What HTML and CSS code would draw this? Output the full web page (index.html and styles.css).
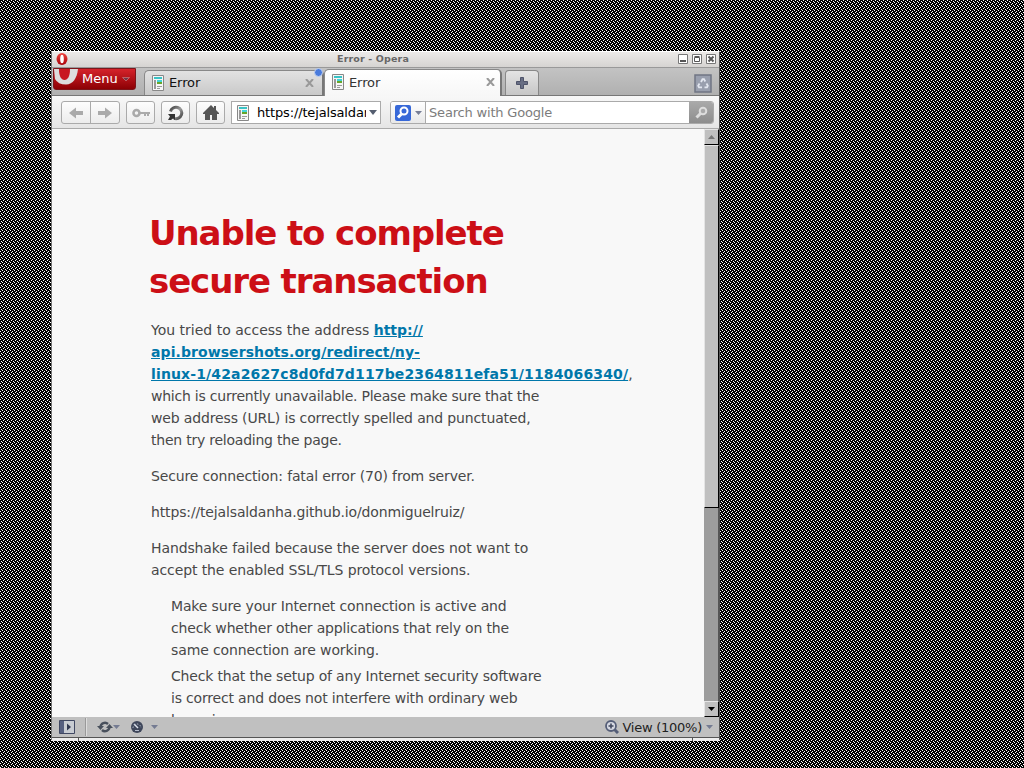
FILE: index.html
```html
<!DOCTYPE html>
<html lang="en">
<head>
<meta charset="utf-8">
<title>Error - Opera</title>
<link rel="stylesheet" href="styles.css">
</head>
<body>
<svg class="defs" width="0" height="0">
  <defs>
    <linearGradient id="red" x1="0" y1="0" x2="0" y2="1"><stop offset="0" stop-color="#f0453f"/><stop offset="1" stop-color="#a80008"/></linearGradient>
    <linearGradient id="dark" x1="0" y1="0" x2="1" y2="1"><stop offset="0" stop-color="#444"/><stop offset=".5" stop-color="#999"/><stop offset="1" stop-color="#444"/></linearGradient>
    <symbol id="page" viewBox="0 0 12 16">
      <path fill="#f6f6f6" stroke="#888" d="M.5.5h11v15H.5z"/>
      <path fill="#39c3c6" d="M2 2h8v2H2z"/><path fill="#999" d="M2 5h2v9H2zM5 11h5v1H5zM5 13h3v1H5z"/>
      <path fill="#41d5d7" d="M5 5h5v2H5z"/><path fill="#68a52a" d="M5 7h5v2H5z"/>
    </symbol>
    <symbol id="arrow" viewBox="0 0 14 12"><path fill="#aaa" d="M0 6l7-5.500V4h7v4H7v3.500z"/></symbol>
    <symbol id="down" viewBox="0 0 7 4"><path d="M0 0h7L3.500 4z"/></symbol>
  </defs>
</svg>
<div class="window">
  <div class="titlebar">
    <svg class="app" width="12" height="12" viewBox="0 0 12 12"><ellipse cx="6" cy="6" rx="5.500" ry="6" fill="url(#red)"/><ellipse cx="6" cy="6" rx="1.800" ry="4.300" fill="#fff"/></svg>
    <span class="title">Error - Opera</span>
    <svg class="winbtns" width="38" height="10" viewBox="0 0 38 10">
      <g fill="#fff" stroke="#777"><path d="M.5.5h9v9h-9zM14.500.5h9v9h-9zM28.500.5h9v9h-9z"/></g>
      <path fill="#555" d="M2 6h6v2H2z"/><path fill="none" stroke="#555" d="M16.500 3.500h5v4h-5zM16.500 2.500h5"/>
      <path stroke="#555" stroke-width="2" d="M30.500 2.500l5 5m0-5l-5 5"/>
    </svg>
  </div>
  <div class="tabbar">
    <div class="menu">
      <svg width="24" height="18" viewBox="0 0 24 18"><path fill="#ddd" d="M0 0H24C23 9 19 15.500 12 15.500Q4 15.500 1 10z"/><path fill="#c81820" d="M5 0h11c0 7-2 11-5.500 11S5 7 5 0z"/></svg>
      <span>Menu</span>
      <svg class="mdown" width="8" height="5"><path d="M.5.5h7L4 4z" fill="#6c3848" stroke="#d07a80" stroke-width=".7"/></svg>
    </div>
    <div class="tab back">
      <svg width="12" height="16"><use href="#page"/></svg><span>Error</span>
      <svg class="x" width="9" height="8" viewBox="0 0 9 8"><path d="M1 0l7 8M8 0L1 8"/></svg>
      <i class="dot"></i>
    </div>
    <div class="tab front">
      <svg width="12" height="16"><use href="#page"/></svg><span>Error</span>
      <svg class="x" width="9" height="8" viewBox="0 0 9 8"><path d="M1 0l7 8M8 0L1 8"/></svg>
    </div>
    <div class="newtab"><svg width="12" height="12"><path fill="#686e84" stroke="#4f546a" d="M4.500.5h3v4h4v3h-4v4h-3v-4h-4v-3h4z"/></svg></div>
    <svg class="trash" width="18" height="19" viewBox="0 0 18 19"><path fill="#999fae" stroke="#707684" stroke-width="1.500" d="M1 1h16v17H1z"/><path fill="none" stroke="#e3e7f0" stroke-width="1.800" d="M7 8l1.500-2.800h1.500L11.300 7.500M12.500 9.500l1.300 2.300-.8 1.500h-2.500M8 13.300H5l-.8-1.500L5.500 9.500"/></svg>
  </div>
  <div class="toolbar">
    <div class="btn pair"><span><svg width="14" height="12"><use href="#arrow"/></svg></span><span><svg class="flip" width="14" height="12"><use href="#arrow"/></svg></span></div>
    <div class="btn key"><svg width="18" height="10" viewBox="0 0 18 10"><circle cx="4.500" cy="5" r="3" fill="none" stroke="#aaa" stroke-width="2.600"/><path fill="#aaa" d="M8 4h10v2h-1v2h-2V6h-1v2h-2V6H8z"/></svg></div>
    <div class="btn reload"><svg width="16" height="16" viewBox="0 0 16 16"><path fill="none" stroke="url(#dark)" stroke-width="3" d="M2.500 6.500A5.700 5.700 0 1 1 6 13.300"/><path fill="#333" d="M0 9h7v6l-2-1.500L3 15H0l2-3.500z"/></svg></div>
    <div class="btn home"><svg width="16" height="15" viewBox="0 0 16 15"><path fill="#555" d="M8 0l3 3V1h2v4l3 3v1h-2v6H9v-5H7v5H2V9H0V8z"/></svg></div>
    <div class="address"><svg width="12" height="16"><use href="#page"/></svg><span class="url">https://tejalsaldanha</span><svg class="adown" width="8" height="5" viewBox="0 0 7 4" preserveAspectRatio="none"><path d="M0 0h7L3.500 4z"/></svg></div>
    <div class="search">
      <div class="engine"><svg width="16" height="16"><rect width="16" height="16" rx="2" fill="#3768d8"/><circle cx="9" cy="6" r="3.500" fill="none" stroke="#fff" stroke-width="2"/><path stroke="#fff" stroke-width="3" d="M6.500 9L3 12.500"/></svg><svg width="7" height="4"><use href="#down"/></svg></div>
      <span class="hint">Search with Google</span>
      <div class="go"><svg width="13" height="13"><circle cx="8" cy="5" r="3.300" fill="#aaa" stroke="#ddd" stroke-width="2"/><path stroke="#ddd" stroke-width="3" d="M5.500 7.500L1.500 11.500"/></svg></div>
    </div>
  </div>
  <div class="view">
    <div class="page">
      <h1>Unable to complete<br>secure transaction</h1>
      <p>You tried to access the address <a>http://<br><span class="w1">api.browsershots.org/redirect/ny-</span><br><span class="w2">linux-1/42a2627c8d0fd7d117be2364811efa51/1184066340/</span></a>,<br><span class="t4">which is currently unavailable. Please make sure that the</span><br><span class="t2">web address (URL) is correctly spelled and punctuated,</span><br><span class="t4">then try reloading the page.</span></p>
      <p class="t2">Secure connection: fatal error (70) from server.</p>
      <p class="t2">https://tejalsaldanha.github.io/donmiguelruiz/</p>
      <p class="t1">Handshake failed because the server does not want to<br>accept the enabled SSL/TLS protocol versions.</p>
      <ul><li><span class="t2">Make sure your Internet connection is active and</span><br><span class="t3">check whether other applications that rely on the</span><br><span class="t1">same connection are working.</span></li>
      <li class="t3">Check that the setup of any Internet security software<br>is correct and does not interfere with ordinary web<br>browsing.</li></ul>
    </div>
    <div class="scroll">
      <div class="sbtn"><svg class="up" width="7" height="4"><use href="#down"/></svg></div>
      <div class="thumb"></div>
      <div class="track"></div>
      <div class="sbtn end"><svg width="7" height="4"><use href="#down"/></svg></div>
    </div>
  </div>
  <div class="status">
    <svg class="panel" width="16" height="14"><path fill="#c8ccd2" stroke="#404862" d="M.5.5h15v13H.5z"/><path fill="#566080" d="M1 1h4v12H1z"/><path fill="#303850" d="M8 3.500l4 3.500-4 3.500z"/></svg>
    <i class="sep"></i>
    <svg class="sync" width="16" height="12" viewBox="0 0 16 12"><path fill="none" stroke="#48505c" stroke-width="2.500" d="M3.500 6A4.500 4.500 0 0 1 11 3M12.500 6A4.500 4.500 0 0 1 5 9"/><path fill="#48505c" d="M0 5h7L3.500 9zM9 7h7l-3.500-4z"/></svg>
    <svg class="sd" width="7" height="4"><use href="#down"/></svg>
    <svg class="gauge" width="12" height="12"><circle cx="6" cy="6" r="6" fill="#3e465a"/><path stroke="#dde3ee" stroke-width="1.500" d="M3 3l4 4"/><path fill="none" stroke="#b5bccb" stroke-dasharray="1.500 1.500" d="M2 7a4 4 0 1 1 8 0"/><path stroke="#b5bccb" d="M4 9.500h4"/></svg>
    <svg class="sd2" width="7" height="4"><use href="#down"/></svg>
    <svg class="mag" width="14" height="14"><circle cx="6" cy="6" r="5" fill="#d5d8e2" stroke="#555e78" stroke-width="1.800"/><path stroke="#40485e" stroke-width="1.600" d="M3.500 6h5M6 3.500v5"/><path stroke="#555e78" stroke-width="3" d="M9.500 9.500L13 13"/></svg>
    <span class="zoom">View (100%)</span>
    <svg class="sd3" width="7" height="4"><use href="#down"/></svg>
  </div>
  <div class="grip"><i></i><i></i><i></i></div>
</div>
</body>
</html>
```
FILE: styles.css
```css
* { box-sizing: border-box; }
html { height: 100%; background: #000; }
body {
  margin: 0; height: 768px; overflow: hidden; padding: 51px 0 0 51px;
  font-family: "DejaVu Sans", sans-serif; font-size: 13px; color: #111;
  background:
    conic-gradient(from 0deg at 1px 1px, transparent 75%, #fff 0) 3px 0 / 4px 4px,
    conic-gradient(from 0deg at 1px 1px, transparent 75%, #fff 0) 1px 1px / 4px 4px,
    conic-gradient(from 0deg at 1px 1px, transparent 75%, #fff 0) 2px 2px / 4px 4px,
    conic-gradient(from 0deg at 1px 1px, transparent 75%, #fff 0) 0 3px / 4px 4px, #000;
}
.defs { position: absolute; }
svg { display: block; flex: none; }
span { white-space: nowrap; }
.window { width: 669px; height: 689px; border: 1px solid #777; border-top-color: #fff; border-right-color: #555; background: #c0c0c0; display: flex; flex-direction: column; }
.titlebar { height: 16px; flex: none; display: flex; align-items: center; background: linear-gradient(#eceae8, #d6d4d2); border-bottom: 1px solid #999; padding-left: 4px; }
.app { margin-top: -1px; }
.title { flex: 1; text-align: center; font-size: 9.500px; font-weight: bold; color: #666; padding: 0 14px 2px; letter-spacing: .15px; }
.winbtns { margin: -1px 3px 0 0; }
.tabbar { height: 28px; flex: none; display: flex; align-items: flex-end; border-bottom: 1px solid #777; background: linear-gradient(#c3c3c3, #b0b0b0); }
.menu { width: 83px; height: 22px; align-self: flex-start; margin: 0 8px 0 1px; display: flex; border: 1px solid #7b161b; border-radius: 0 0 3px 3px; background: linear-gradient(#d5232b, #8c0004); color: #fff; align-items: flex-start; overflow: hidden; }
.menu span { margin-left: 4px; line-height: 20px; }
.mdown { margin: 8px 0 0 4px; }
.tab { height: 26px; display: flex; align-items: center; padding: 0 7px 2px; border: 1px solid #888; border-bottom: 0; border-radius: 5px 5px 0 0; position: relative; }
.tab span { margin-left: 5px; flex: 1; letter-spacing: -.1px; }
.back { width: 180px; height: 25px; padding-right: 8px; padding-bottom: 1px; background: linear-gradient(#e2e2e2, #c9c9c9); border-right: 2px solid #777; }
.front { width: 178px; height: 27px; margin-bottom: -1px; border-right: 2px solid #777; padding-right: 5px; background: linear-gradient(#fff, #f7f7f7); }
.front span { color: #333; }
.x { fill: none; stroke: #999; stroke-width: 2; }
.dot { position: absolute; right: -1px; top: -3px; width: 9px; height: 9px; border-radius: 50%; background: #4a7bdc; border: 1px solid #c6d4ee; }
.newtab { width: 34px; height: 25px; margin-left: 3px; border: 1px solid #888; border-bottom: 0; border-radius: 4px 4px 0 0; background: linear-gradient(#e4e4e4, #c6c6c6); display: flex; align-items: center; justify-content: center; }
.trash { margin: 0 7px 2px auto; }
.toolbar { height: 33px; flex: none; display: flex; align-items: center; padding: 1px 0 0 9px; background: linear-gradient(#f8f8f8, #e5e5e5); border-bottom: 1px solid #aaa; }
.btn { height: 23px; border: 1px solid #aaa; border-radius: 3px; background: linear-gradient(#fdfdfd, #ececec); display: flex; align-items: center; justify-content: center; }
.pair { width: 59px; }
.pair span { flex: 1; height: 21px; display: flex; align-items: center; justify-content: center; }
.pair span + span { border-left: 1px solid #aaa; }
.flip { transform: scaleX(-1); }
.key { width: 29px; margin-left: 6px; }
.reload, .home { width: 29px; margin-left: 6px; }
.address { width: 150px; height: 23px; margin-left: 6px; border: 1px solid #aaa; background: #fff; display: flex; align-items: center; padding-left: 5px; }
.url { width: 109px; margin-left: 8px; overflow: hidden; color: #000; letter-spacing: -.15px; }
.adown { fill: #555e70; margin-left: 3px; }
.search { flex: 1; height: 23px; margin: 0 5px 0 9px; display: flex; border: 1px solid #aaa; border-radius: 3px; background: #fff; overflow: hidden; }
.engine { width: 35px; border-right: 1px solid #aaa; background: linear-gradient(#fff, #e8e8e8); display: flex; align-items: center; gap: 4px; padding-left: 4px; fill: #777e96; }
.hint { flex: 1; padding-left: 3px; line-height: 21px; color: #7c7c7c; letter-spacing: -.18px; }
.go { width: 24px; background: linear-gradient(#a9a9a9, #8d8d8d); display: flex; align-items: center; justify-content: center; }
.view { flex: none; height: 588px; display: flex; }
.page { width: 652px; background: #f8f8f8; overflow: hidden; padding: 80px 0 0 99px; font-size: 14px; line-height: 22px; color: #484848; white-space: nowrap; }
h1 { margin: 0 0 14px -2px; font-size: 34px; line-height: 48px; letter-spacing: -1.1px; color: #cc0f16; }
p { margin: 0 0 14px; }
a { color: #0077aa; font-weight: bold; text-decoration: underline; }
.t1 { letter-spacing: -.11px; }
.t2 { letter-spacing: -.145px; }
.t3 { letter-spacing: -.18px; }
.t4 { letter-spacing: -.23px; }
.w1 { letter-spacing: .08px; }
.w2 { letter-spacing: .14px; }
ul { list-style: none; margin: 0; padding: 0 0 0 20px; }
li { margin-bottom: 4px; }
.scroll { width: 15px; display: flex; flex-direction: column; background: #9d9d9d; }
.sbtn { height: 16px; flex: none; background: #c0c0c0; border: 1px solid #e5e5e5; border-right-color: #000; border-bottom-color: #000; display: flex; align-items: center; justify-content: center; fill: #777; }
.up { transform: scaleY(-1); }
.thumb { height: 363px; flex: none; background: #c0c0c0; border: 1px solid #e5e5e5; border-right-color: #000; border-bottom-color: #000; }
.track { flex: 1; border-right: 1px solid #555; }
.end { fill: #000; }
.status { height: 20px; flex: none; display: flex; align-items: center; padding-left: 7px; fill: #747b92; }
.sep { width: 2px; height: 18px; margin: 0 10px 0 10px; background: #999; border-right: 1px solid #ddd; }
.gauge { margin-left: 11px; }
.sd2 { margin-left: 8px; }
.mag { margin-left: auto; }
.zoom { margin-left: 3px; color: #222; letter-spacing: -.25px; }
.sd3 { margin: 0 6px 0 4px; }
.grip { height: 4px; flex: none; display: flex; border-top: 1px solid #555; background: #eee; }
.grip i:nth-child(1), .grip i:nth-child(3) { width: 26px; }
.grip i:nth-child(2) { flex: 1; border: solid #555; border-width: 0 1px; }
```
